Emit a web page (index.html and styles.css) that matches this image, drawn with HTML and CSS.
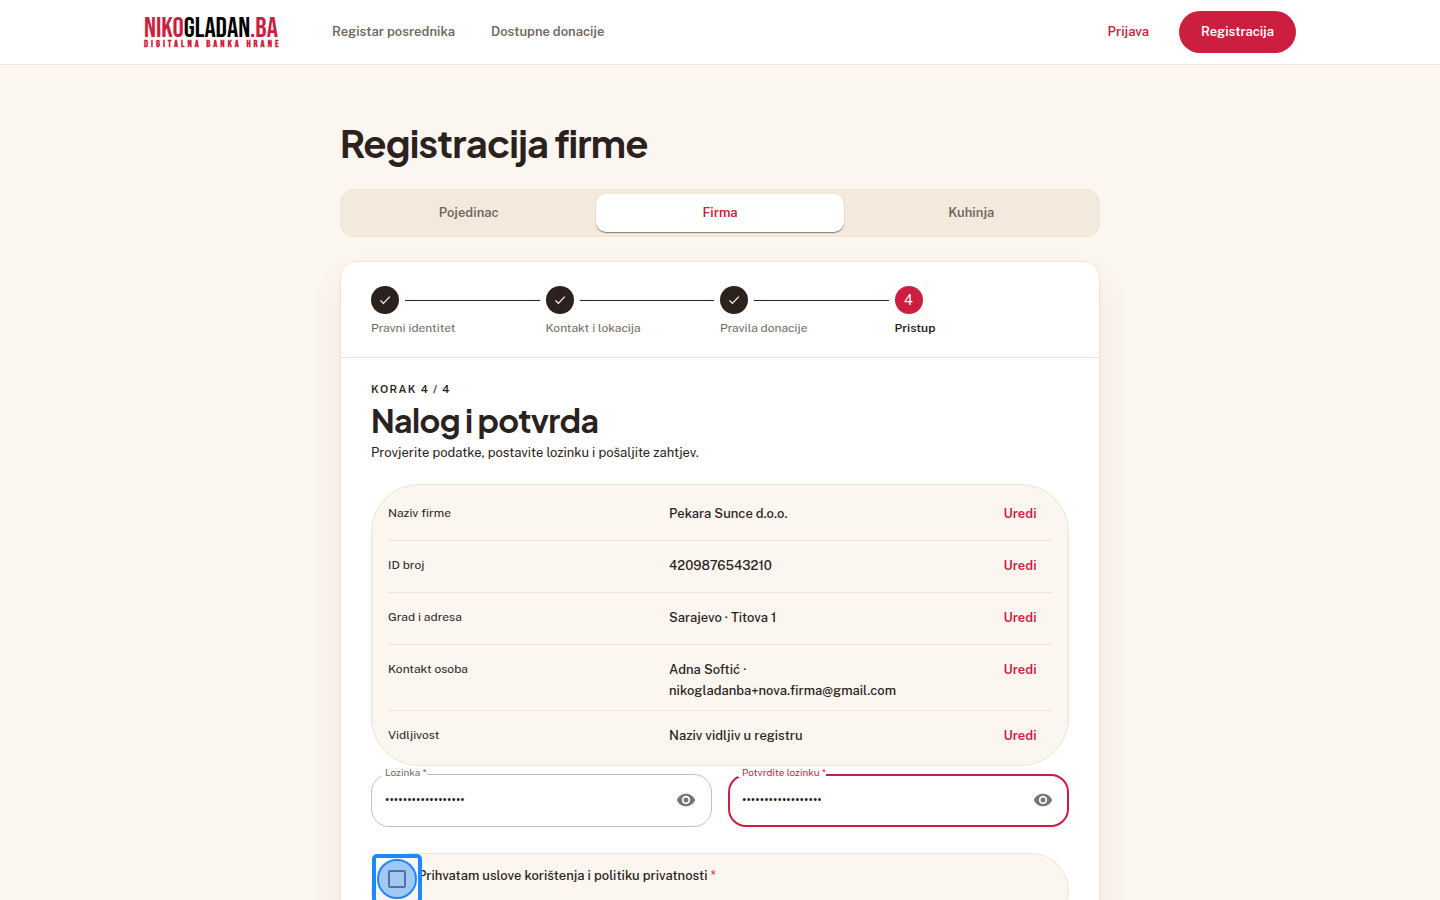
FILE: index.html
```html
<!DOCTYPE html>
<html lang="bs">
<head>
    <meta charset="UTF-8">
    <meta name="viewport" content="width=device-width, initial-scale=1.0">
    <title>Registracija firme | NikoGladan.ba</title>
    <link rel="stylesheet" href="styles.css">
</head>
<body>
    <header class="site-header">
        <div class="header-inner">
            <a href="#" class="logo">
                <span class="logo-name"><span class="logo-red">NIKO</span>GLADAN<span class="logo-red">.BA</span></span>
                <span class="logo-tagline">DIGITALNA BANKA HRANE</span>
            </a>
            <nav class="main-nav">
                <a href="#">Registar posrednika</a>
                <a href="#">Dostupne donacije</a>
            </nav>
            <div class="header-actions">
                <a href="#" class="login-link">Prijava</a>
                <a href="#" class="register-link">Registracija</a>
            </div>
        </div>
    </header>

    <main class="page">
        <h1>Registracija firme</h1>

        <div class="tabs" role="tablist">
            <button type="button" role="tab" class="tab">Pojedinac</button>
            <button type="button" role="tab" class="tab active" aria-selected="true">Firma</button>
            <button type="button" role="tab" class="tab">Kuhinja</button>
        </div>

        <div class="card">
            <ol class="stepper">
                <li class="step done">
                    <div class="step-track">
                        <span class="step-dot"><svg viewBox="0 0 14 14" width="14" height="14"><path d="M2.4 7.4 5.4 10.3 11.8 3.6"/></svg></span>
                    </div>
                    <span class="step-label">Pravni identitet</span>
                </li>
                <li class="step done">
                    <div class="step-track">
                        <span class="step-dot"><svg viewBox="0 0 14 14" width="14" height="14"><path d="M2.4 7.4 5.4 10.3 11.8 3.6"/></svg></span>
                    </div>
                    <span class="step-label">Kontakt i lokacija</span>
                </li>
                <li class="step done">
                    <div class="step-track">
                        <span class="step-dot"><svg viewBox="0 0 14 14" width="14" height="14"><path d="M2.4 7.4 5.4 10.3 11.8 3.6"/></svg></span>
                    </div>
                    <span class="step-label">Pravila donacije</span>
                </li>
                <li class="step current">
                    <div class="step-track">
                        <span class="step-dot">4</span>
                    </div>
                    <span class="step-label">Pristup</span>
                </li>
            </ol>

            <form class="step-content">
                <p class="eyebrow">KORAK 4 / 4</p>
                <h2>Nalog i potvrda</h2>
                <p class="intro">Provjerite podatke, postavite lozinku i pošaljite zahtjev.</p>

                <div class="summary">
                    <div class="summary-row">
                        <span class="summary-label">Naziv firme</span>
                        <span class="summary-value">Pekara Sunce d.o.o.</span>
                        <button type="button" class="edit-btn">Uredi</button>
                    </div>
                    <div class="summary-row">
                        <span class="summary-label">ID broj</span>
                        <span class="summary-value">4209876543210</span>
                        <button type="button" class="edit-btn">Uredi</button>
                    </div>
                    <div class="summary-row">
                        <span class="summary-label">Grad i adresa</span>
                        <span class="summary-value">Sarajevo · Titova 1</span>
                        <button type="button" class="edit-btn">Uredi</button>
                    </div>
                    <div class="summary-row">
                        <span class="summary-label">Kontakt osoba</span>
                        <span class="summary-value">Adna Softić · nikogladanba+nova.firma@gmail.com</span>
                        <button type="button" class="edit-btn">Uredi</button>
                    </div>
                    <div class="summary-row">
                        <span class="summary-label">Vidljivost</span>
                        <span class="summary-value">Naziv vidljiv u registru</span>
                        <button type="button" class="edit-btn">Uredi</button>
                    </div>
                </div>

                <div class="password-fields">
                    <div class="field">
                        <label for="password">Lozinka <span class="required">*</span></label>
                        <input type="password" id="password" value="lozinka-firme-2024">
                        <button type="button" class="eye-btn" aria-label="Prikaži lozinku">
                            <svg viewBox="0 0 24 24" width="20" height="20"><path d="M12 4.5C7 4.5 2.73 7.61 1 12c1.73 4.39 6 7.5 11 7.5s9.27-3.11 11-7.5c-1.73-4.39-6-7.5-11-7.5M12 17c-2.76 0-5-2.24-5-5s2.24-5 5-5 5 2.24 5 5-2.24 5-5 5m0-8c-1.66 0-3 1.34-3 3s1.34 3 3 3 3-1.34 3-3-1.34-3-3-3"/></svg>
                        </button>
                    </div>
                    <div class="field focused">
                        <label for="password_confirm">Potvrdite lozinku <span class="required">*</span></label>
                        <input type="password" id="password_confirm" value="lozinka-firme-2024">
                        <button type="button" class="eye-btn" aria-label="Prikaži lozinku">
                            <svg viewBox="0 0 24 24" width="20" height="20"><path d="M12 4.5C7 4.5 2.73 7.61 1 12c1.73 4.39 6 7.5 11 7.5s9.27-3.11 11-7.5c-1.73-4.39-6-7.5-11-7.5M12 17c-2.76 0-5-2.24-5-5s2.24-5 5-5 5 2.24 5 5-2.24 5-5 5m0-8c-1.66 0-3 1.34-3 3s1.34 3 3 3 3-1.34 3-3-1.34-3-3-3"/></svg>
                        </button>
                    </div>
                </div>

                <div class="consent">
                    <span class="consent-check">
                        <input type="checkbox" id="terms">
                        <span class="highlight"><span class="highlight-dot"></span></span>
                    </span>
                    <label for="terms">Prihvatam uslove korištenja i politiku privatnosti <span class="required">*</span></label>
                </div>
            </form>
        </div>
    </main>
</body>
</html>
```
FILE: styles.css
```css
* {
    box-sizing: border-box;
}
body {
    margin: 0;
    background-color: #fbf6ef;
    color: #2b211d;
    font-family: "Public Sans", Inter, sans-serif;
    font-size: 13px;
    line-height: 21px;
}
a {
    text-decoration: none;
}
button {
    border: none;
    background: none;
    font: inherit;
    cursor: pointer;
}
h1, h2, p {
    margin: 0;
}
h1, h2 {
    font-family: "Plus Jakarta Sans", "Public Sans", Inter, sans-serif;
    font-weight: 700;
    letter-spacing: -0.02em;
}

/* Header */
.site-header {
    background-color: #fff;
    border-bottom: 1px solid #f3e5d8;
}
.header-inner {
    display: flex;
    align-items: center;
    max-width: 1152px;
    height: 64px;
    margin: 0 auto;
}
.logo {
    display: flex;
    flex-direction: column;
    width: 136px;
    margin-right: 52px;
    color: #000;
}
.logo-name {
    font-family: "Bebas Neue", "Roboto Condensed", Roboto, sans-serif;
    font-size: 28px;
    font-weight: 400;
    line-height: 24px;
    white-space: nowrap;
}
.logo-red {
    color: #cc1e3f;
}
.logo-tagline {
    font-family: "Bebas Neue", "Roboto Condensed", Roboto, sans-serif;
    color: #cc1e3f;
    font-size: 10px;
    font-weight: bold;
    line-height: 6px;
    letter-spacing: 3px;
    white-space: nowrap;
}
.main-nav {
    display: flex;
    gap: 36px;
    padding-bottom: 1px;
}
.main-nav a {
    color: #73675f;
    font-weight: 600;
}
.header-actions {
    display: flex;
    align-items: baseline;
    gap: 30px;
    margin-left: auto;
    font-weight: 600;
}
.login-link {
    color: #cc1e3f;
}
.register-link {
    padding: 10px 22px 11px;
    border-radius: 21px;
    background-color: #cc1e3f;
    color: #fff;
}

/* Page */
.page {
    max-width: 760px;
    margin: 0 auto;
    padding: 54px 0 48px;
}
h1 {
    font-size: 38px;
    line-height: 48px;
}
.tabs {
    display: grid;
    grid-template-columns: repeat(3, 1fr);
    gap: 4px;
    margin-top: 22px;
    padding: 4px;
    border: 1px solid #efe4d6;
    border-radius: 14px;
    background-color: #f3eadd;
}
.tab {
    height: 38px;
    padding: 0 6px 2px;
    border-radius: 10px;
    color: #73675f;
    font-weight: 600;
}
.tab.active {
    background-color: #fff;
    color: #cc1e3f;
    box-shadow: 0 1px 1px rgba(43, 33, 29, 0.55);
}
.card {
    margin-top: 24px;
    border: 1px solid #efe4d6;
    border-radius: 16px;
    background-color: #fff;
    box-shadow: 0 16px 32px rgba(150, 60, 40, 0.08);
}

/* Stepper */
.stepper {
    display: grid;
    grid-template-columns: repeat(4, 1fr);
    margin: 0;
    padding: 24px 30px 20px;
    border-bottom: 1px solid #ebe3da;
    list-style: none;
}
.step-track {
    display: flex;
    align-items: center;
    gap: 6px;
    padding-right: 6px;
}
.step-dot {
    display: flex;
    align-items: center;
    justify-content: center;
    width: 28px;
    height: 28px;
    border-radius: 50%;
    background-color: #2b211d;
    color: #fff;
    font-size: 14px;
}
.step-dot path {
    fill: none;
    stroke: #fcf6ef;
    stroke-width: 1.2;
}
.step.done .step-track::after {
    content: "";
    flex: 1;
    height: 1px;
    background-color: #2b211d;
}
.step.current .step-dot {
    background-color: #cc1e3f;
}
.step-label {
    display: block;
    margin-top: 5px;
    color: #73675f;
    font-size: 12px;
    line-height: 18px;
}
.step.current .step-label {
    color: #2b211d;
    font-weight: 600;
}

/* Step content */
.step-content {
    padding: 23px 30px 32px;
}
.eyebrow {
    font-size: 11px;
    font-weight: 600;
    line-height: 16px;
    letter-spacing: 0.12em;
}
h2 {
    margin: 2px 0 1px;
    font-size: 32px;
    line-height: 42px;
}
.summary {
    margin-top: 21px;
    padding: 4px 16px 3px;
    border: 1px solid #efe4d6;
    border-radius: 48px;
    background-color: #fbf6ef;
}
.summary-row {
    display: grid;
    grid-template-columns: 7fr 8fr 64px;
    gap: 16px;
    align-items: start;
    padding: 10px 0 9px;
}
.summary-row + .summary-row {
    border-top: 1px solid #efe4d6;
}
.summary-label {
    padding-top: 4px;
    font-size: 12px;
}
.summary-value {
    padding-top: 4px;
    font-weight: 500;
}
.edit-btn {
    height: 32px;
    padding: 0 0 3px;
    color: #cc1e3f;
    font-weight: 600;
}
.required {
    color: #dc3250;
}

/* Password fields */
.password-fields {
    display: grid;
    grid-template-columns: 1fr 1fr;
    gap: 16px;
    margin-top: 8px;
}
.field {
    position: relative;
    display: flex;
    align-items: center;
    height: 53px;
    padding: 0 15px 0 13px;
    border: 1px solid #c4c0bd;
    border-radius: 18px;
}
.field label {
    position: absolute;
    top: -8px;
    left: 9px;
    padding-left: 4px;
    background-color: #fff;
    color: #73675f;
    font-size: 10px;
    line-height: 10px;
}
.field input {
    flex: 1;
    min-width: 0;
    padding: 0;
    border: none;
    outline: none;
    background: none;
    color: #2b211d;
    font: inherit;
    font-size: 14px;
}
.field.focused {
    padding: 0 14px 0 12px;
    border: 2px solid #cc1e3f;
}
.field.focused label {
    top: -9px;
    left: 8px;
    color: #cc1e3f;
}
.field.focused .required {
    color: #cc1e3f;
}
.eye-btn {
    display: flex;
    padding: 0 0 1px;
}
.eye-btn path {
    fill: #757575;
}

/* Consent */
.consent {
    display: flex;
    align-items: flex-start;
    margin-top: 26px;
    padding: 0 16px 24px 0;
    border: 1px solid #efe4d6;
    border-radius: 48px;
    background-color: #fbf6ef;
}
.consent label {
    margin-left: -4px;
    padding-top: 11px;
    font-weight: 500;
}
.consent-check {
    position: relative;
    display: flex;
    align-items: center;
    justify-content: center;
    width: 50px;
    height: 50px;
}
.consent-check input {
    appearance: none;
    width: 18px;
    height: 18px;
    margin: 0;
    border: 2px solid #73675f;
    border-radius: 2px;
}
.highlight {
    position: absolute;
    inset: 0;
    z-index: 1;
    display: flex;
    align-items: center;
    justify-content: center;
    border: 4px solid #1e88ff;
    border-radius: 5px;
    pointer-events: none;
}
.highlight-dot {
    width: 40px;
    height: 40px;
    border: 2px solid #1e88ff;
    border-radius: 50%;
    background-color: rgba(30, 136, 255, 0.4);
}
```
